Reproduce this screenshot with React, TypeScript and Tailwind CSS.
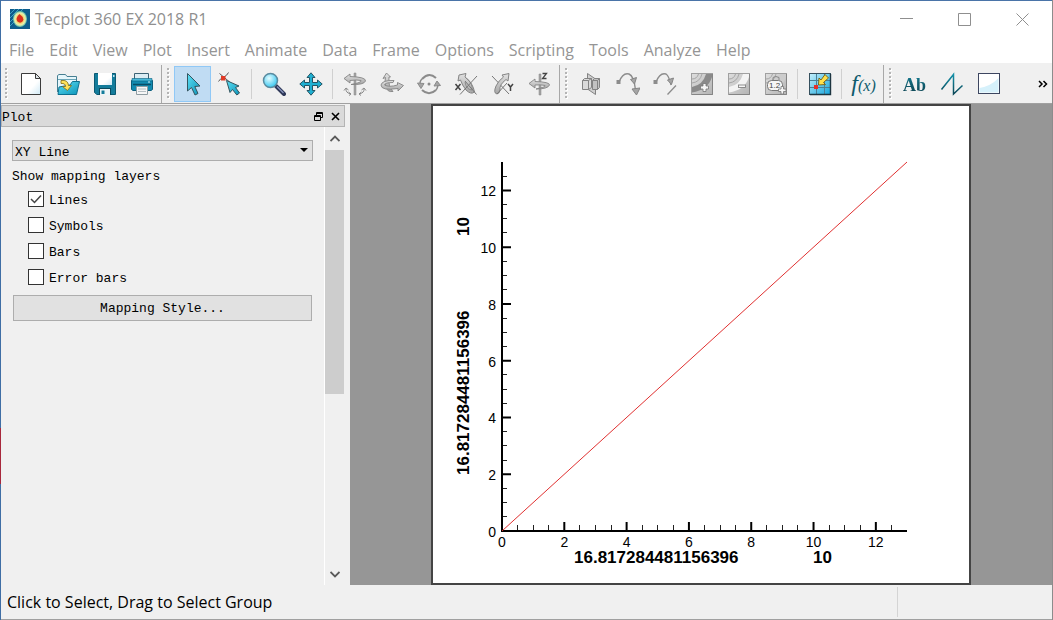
import React, { useState } from 'react';

const uiFont = "font-['Open_Sans','Noto_Sans',sans-serif]";
const panelFont = "font-['Liberation_Mono','Noto_Sans_CJK_SC',monospace]";

const menus = [
  'File', 'Edit', 'View', 'Plot', 'Insert', 'Animate', 'Data',
  'Frame', 'Options', 'Scripting', 'Tools', 'Analyze', 'Help',
];

/* ---------- toolbar icons ---------- */

const Icon: React.FC<{ children: React.ReactNode }> = ({ children }) => (
  <svg width={24} height={24} viewBox="0 0 24 24" fill="none" aria-hidden="true">
    {children}
  </svg>
);

// shared gradients for all icons
const IconDefs = () => (
  <svg width={0} height={0} className="absolute" aria-hidden="true">
    <defs>
      <linearGradient id="cyan" x1="0" y1="0" x2="1" y2="1">
        <stop offset="0" stopColor="#5fe0f5" />
        <stop offset="1" stopColor="#0a93b8" />
      </linearGradient>
      <linearGradient id="paper" x1="0" y1="0" x2="1" y2="1">
        <stop offset="0" stopColor="#ffffff" />
        <stop offset="0.6" stopColor="#ffffff" />
        <stop offset="1" stopColor="#cfe9f5" />
      </linearGradient>
      <linearGradient id="steel" x1="0" y1="0" x2="0" y2="1">
        <stop offset="0" stopColor="#e2e2e2" />
        <stop offset="1" stopColor="#a6a6a6" />
      </linearGradient>
      <linearGradient id="tile" x1="0" y1="0" x2="1" y2="1">
        <stop offset="0" stopColor="#dedede" />
        <stop offset="1" stopColor="#b4b4b4" />
      </linearGradient>
      <linearGradient id="grid" x1="0" y1="0" x2="1" y2="1">
        <stop offset="0" stopColor="#c5f0fb" />
        <stop offset="1" stopColor="#12a4dc" />
      </linearGradient>
      <linearGradient id="teal" x1="0" y1="0" x2="0" y2="1">
        <stop offset="0" stopColor="#1390a8" />
        <stop offset="1" stopColor="#0b4656" />
      </linearGradient>
      <radialGradient id="lens" cx="0.4" cy="0.35" r="0.7">
        <stop offset="0" stopColor="#e6fcff" />
        <stop offset="1" stopColor="#2cc4f0" />
      </radialGradient>
      <radialGradient id="burst">
        <stop offset="0" stopColor="#d4261c" />
        <stop offset="0.35" stopColor="#e2452a" />
        <stop offset="0.5" stopColor="#f2d36b" />
        <stop offset="0.75" stopColor="#e9efb0" />
        <stop offset="1" stopColor="#4db7a5" />
      </radialGradient>
    </defs>
  </svg>
);

const NewIcon = () => (
  <Icon>
    <path d="M2.5 1.5H16.5L21.5 6.5V22.5H2.5Z" fill="url(#paper)" stroke="#3c3c3c" />
    <path d="M16.5 1.5V6.5H21.5Z" fill="#dfe5e8" stroke="#3c3c3c" />
  </Icon>
);

const OpenIcon = () => (
  <Icon>
    <path d="M1.5 20V3.5L3 2.5H9.5L11 4.5H20.5V12" fill="#e6f6fb" stroke="#477f92" />
    <path d="M2 7.5H20" stroke="#6ba6b8" />
    <path d="M2 22.5L3 15L14 13L16.5 9.5H23.5L20.5 22.5Z" fill="url(#cyan)" stroke="#0d6f8f" />
    <path d="M5 8.5Q12 7.5 12.5 13.5H15.5L11.5 18.5L6.5 14.5H9.5Q9.5 11 5 11.5Z" fill="#ffe25a" stroke="#7d6a1b" strokeWidth="0.8" />
  </Icon>
);

const SaveIcon = () => (
  <Icon>
    <path d="M1.5 1.5H22.5V22.5H3.7L1.5 20.3Z" fill="#147c9b" stroke="#0b5a73" />
    <path d="M5 1H19V13H5Z" fill="url(#paper)" />
    <path d="M6 16H18V23H6Z" fill="#0b4a5e" />
    <path d="M7 17H17V23H7Z" fill="#eef4f6" />
    <path d="M8.5 18.5H11.5V22H8.5Z" fill="#147c9b" />
    <path d="M20 3H21.5V5H20Z" fill="#bfe4ef" />
  </Icon>
);

const PrintIcon = () => (
  <Icon>
    <path d="M4.5 1.5H18.5V8H4.5Z" fill="#dcedf4" stroke="#3d6375" />
    <path d="M1.5 8.5H22.5V17.5L21 18.5H3L1.5 17.5Z" fill="#138bb0" stroke="#0c5f7d" />
    <path d="M2 6.5H22V9H2Z" fill="#49b9d9" stroke="#0c5f7d" strokeWidth="0.6" />
    <path d="M3 12.5H21" stroke="#0a4d66" strokeWidth="1.5" />
    <path d="M18 10H20" stroke="#d7f4fb" />
    <path d="M6.500 14.500H17.500V22.500H6.500Z" fill="#f6f6f6" stroke="#8f9ca2" />
    <path d="M8 17H16M8 19.5H16" stroke="#b5bec2" />
  </Icon>
);

const SelectIcon = () => (
  <Icon>
    <path d="M6.5 1.5V19L10.5 15.5L14 23L17 21.5L13.8 14.5L19 14Z" fill="url(#cyan)" stroke="#35555f" />
  </Icon>
);

const AdjustIcon = () => (
  <Icon>
    <path d="M0.5 9.5Q2 6.500 6 5Q9 3.500 10.500 0.500M1.500 1.500L14 12" stroke="#5a5a5a" />
    <rect x="3" y="4" width="4.500" height="4.500" fill="#e03a26" />
    <path d="M8.500 8.500L12 20.500L14.500 17.500L18.800 23L21.500 21L17.500 15.500L21 14Z" fill="url(#cyan)" stroke="#35555f" />
  </Icon>
);

const ZoomIcon = () => (
  <Icon>
    <path d="M14 14L22 22" stroke="#2d3657" strokeWidth="4" strokeLinecap="round" />
    <path d="M15 14.5L21.5 21" stroke="#8895bd" strokeWidth="1.2" />
    <circle cx="8.5" cy="8.5" r="7" fill="url(#lens)" stroke="#5b8ba0" strokeWidth="1.5" />
  </Icon>
);

const MoveIcon = () => (
  <Icon>
    <path
      d="M12 0.800L16 5.500H13.500V10.500H18.500V8L23.200 12L18.500 16V13.500H13.500V18.500H16L12 23.200L8 18.500H10.500V13.500H5.500V16L0.800 12L5.500 8V10.500H10.500V5.500H8Z"
      fill="#1fb0d2"
      stroke="#235565"
    />
  </Icon>
);

const RotateZIcon = () => (
  <Icon>
    <path d="M11 1H13V23H11Z" fill="#a5a5a5" stroke="#8a8a8a" strokeWidth="0.5" />
    <path d="M1 6.500L7 2V4.500Q23 5 22.500 9Q21 13 8 12.500Q19 10.500 18 8.500Q14 7.500 7 8.500V11Z" fill="url(#steel)" stroke="#858585" strokeWidth="0.9" />
    <path d="M8 22Q2.500 21 3 16.500M1 18.500L3 16L5.500 18M5.500 20L8 22L6 23.500M16 22Q21.500 21 21 16.500M23 18.500L21 16L18.500 18M18.500 20L16 22L18 23.500" stroke="#8a8a8a" />
  </Icon>
);

const RotateYIcon = () => (
  <Icon>
    <path d="M6.500 1L10.500 5H9Q8 15 13 19.500Q7 20.500 5.500 14Q4.500 9 5.500 5.500L3 6.500Z" fill="url(#steel)" stroke="#858585" strokeWidth="0.9" />
    <path d="M1 13Q2 8 14 8.500L13 10.500Q5 10.500 4.500 13Q9 15.500 17.500 13V10.500L23.500 13.500L18 19V16.500Q1 19 1 13Z" fill="url(#steel)" stroke="#858585" strokeWidth="0.9" />
  </Icon>
);

const RotateIcon = () => (
  <Icon>
    <path d="M5 7Q12 -0.500 19 6M19 18Q12 24.500 5 18" stroke="#8b8b8b" strokeWidth="2" />
    <path d="M3.500 14.500Q2 9.500 5 7M20.500 10.500Q21.500 15 19 18" stroke="#8b8b8b" strokeWidth="1.500" />
    <path d="M0.500 11L4 16.500L7 11.500Z" fill="#a5a5a5" stroke="#8b8b8b" />
    <path d="M17 14L20 9L23.500 13.500Z" fill="#a5a5a5" stroke="#8b8b8b" />
    <circle cx="12" cy="12" r="1.500" fill="#8b8b8b" />
  </Icon>
);

const RotateXAxisIcon = () => (
  <Icon>
    <path d="M5 3L12 1.500L11 5Q19 11 20.500 20Q17 23 12 18Q8 13 6.500 8L4 9Z" fill="url(#steel)" stroke="#858585" />
    <path d="M11 10Q12.500 18 18 18Q19 11 12 6" stroke="#8a8a8a" />
    <path d="M6 22.500L23 4M11 9L22.500 22.500" stroke="#777" />
    <path d="M1.500 12L6.500 18M6.500 12L1.500 18" stroke="#444" strokeWidth="1.500" />
  </Icon>
);

const RotateYAxisIcon = () => (
  <Icon>
    <path d="M1 4L18 22" stroke="#777" />
    <path d="M11 3L18 1.500L17 9L15 7.500Q8 13 9 18Q9 21 6 22Q2 21 5 14Q8 8 12.500 5Z" fill="url(#steel)" stroke="#858585" />
    <path d="M6 22L16 11" stroke="#777" />
    <path d="M17 12L19.500 15L22 12M19.500 15V19" stroke="#444" strokeWidth="1.500" />
  </Icon>
);

const RotateZAxisIcon = () => (
  <Icon>
    <path d="M11 2H13V23H11Z" fill="#a5a5a5" stroke="#858585" strokeWidth="0.5" />
    <path d="M1 11.500L7 7V9.500Q22 10 21.500 13Q20 17 8 17Q18 15 17 13.500Q13 12.500 7 13V16Z" fill="url(#steel)" stroke="#858585" strokeWidth="0.9" />
    <path d="M14.500 1.500H18.500L14.500 6.500H18.500" stroke="#444" strokeWidth="1.300" />
  </Icon>
);

const SliceIcon = () => (
  <Icon>
    <path d="M8.500 1.500L16.500 7V22.500L8.500 17Z" fill="#cfcfcf" stroke="#838383" />
    <path d="M3.500 8.500H9.500V17.500H3.500ZM3.500 8.500L5.500 6.500H12.500V15.500L9.500 17.500M9.500 8.500L12.500 6.500" fill="#dadada" stroke="#838383" />
    <path d="M13.500 8.500L15.500 6.500H20.500V15.500L18.500 17.500H13.500Z" fill="#c2c2c2" stroke="#838383" />
    <path d="M18.500 8.500V17.500M13.500 8.500H18.500L20.500 6.500" stroke="#838383" />
  </Icon>
);

const StreamIcon = () => (
  <Icon>
    <rect x="0.500" y="8" width="4" height="4" fill="#8c8c8c" />
    <path d="M3 10Q7 0 13 2Q18 4 19.500 18" stroke="#8c8c8c" strokeWidth="1.400" />
    <path d="M14.500 7.500L20.500 5.500L18.500 12ZM16 17L24 16L20.500 23Z" fill="#a5a5a5" stroke="#858585" />
  </Icon>
);

const StreamStopIcon = () => (
  <Icon>
    <rect x="0.500" y="8" width="4" height="4" fill="#8c8c8c" />
    <path d="M3 10Q7 0 13 2Q16 4 18 13" stroke="#8c8c8c" strokeWidth="1.400" />
    <path d="M14.500 8L20.500 6L18.500 12.500Z" fill="#a5a5a5" stroke="#858585" />
    <path d="M14.500 22.500L23 13.500" stroke="#8c8c8c" strokeWidth="1.300" />
  </Icon>
);

const ContourTile: React.FC<{ band: string; children: React.ReactNode }> = ({ band, children }) => (
  <Icon>
    <rect x="1.500" y="1.500" width="21" height="21" fill="url(#tile)" stroke="#a0a0a0" />
    <path d="M2 15Q13 13 16 2H22V5Q18 18 2 20.500Z" fill={band} />
    <path d="M2 7Q7 7 8.500 2M2 11Q10 10 12 2" stroke="#a6a6a6" />
    {children}
    <path d="M2 22.500H22.500V2" stroke="#858585" />
  </Icon>
);

const ContourAddIcon = () => (
  <ContourTile band="#8a8a8a">
    <path d="M13 11.500H16V14H18.500V17H16V19.500H13V17H10.500V14H13Z" fill="#f6f6f6" stroke="#777" strokeWidth="0.8" />
  </ContourTile>
);

const ContourRemoveIcon = () => (
  <ContourTile band="#f4f4f4">
    <rect x="11.500" y="13" width="7" height="2.500" fill="#f6f6f6" stroke="#777" strokeWidth="0.8" />
  </ContourTile>
);

const ContourLabelIcon = () => (
  <ContourTile band="#cccccc">
    <path d="M9 8V5.500Q12 3.500 15 5.500V8" stroke="#888" />
    <rect x="3.500" y="8.500" width="15" height="10" rx="4" fill="#f6f6f6" stroke="#777" />
    <text x="5" y="16" fontSize="8" fontFamily="Liberation Sans, sans-serif" fill="#444">1.2</text>
    <path d="M17 14.500H19.500V17H22V19.500H19.500V22H17V19.500H14.500V17H17Z" fill="#f6f6f6" stroke="#777" strokeWidth="0.8" />
  </ContourTile>
);

const ProbeIcon = () => (
  <Icon>
    <rect x="1.500" y="1.500" width="21" height="21" fill="url(#grid)" stroke="#35505e" />
    <path d="M8.500 2V22M16.500 2V22M2 8.500H22M2 15.500H22" stroke="#4a7f96" />
    <path d="M2 22.500H22.500V2" stroke="#1d3540" strokeWidth="1.400" />
    <path d="M17 2.500L20.500 6L15.500 10.500L17.500 12.500L10.500 13L11 6L13 8Z" fill="#ffe04a" stroke="#6f5d14" strokeWidth="0.9" />
    <rect x="6" y="13" width="4" height="4" fill="#e8302a" />
  </Icon>
);

const PolylineIcon = () => (
  <Icon>
    <path d="M1.500 17.500L13.500 2.500V22L22.500 13.500" stroke="url(#teal)" strokeWidth="1.500" />
  </Icon>
);

const RectIcon = () => (
  <Icon>
    <rect x="1.500" y="1.500" width="21" height="20" fill="#fff" stroke="#3d4660" />
    <path d="M2.500 20.500V16Q14 14 21.500 6V20.500Z" fill="#d6f1fb" />
  </Icon>
);

/* ---------- toolbar ---------- */

interface ToolProps {
  label: string;
  active?: boolean;
  onClick?: () => void;
  children: React.ReactNode;
}

const Tool: React.FC<ToolProps> = ({ label, active, onClick, children }) => (
  <button
    type="button"
    title={label}
    aria-label={label}
    onClick={onClick}
    className={`flex h-9 w-[37px] shrink-0 items-center justify-center border ${
      active ? 'border-[#90c8f6] bg-[#c0dcf3]' : 'border-transparent'
    }`}
  >
    {children}
  </button>
);

const Divider = () => (
  <div className="flex w-[7px] shrink-0 justify-center">
    <div className="h-[30px] w-px bg-[#d0d0d0]" />
  </div>
);

const ToolGroup: React.FC<{ last?: boolean; children: React.ReactNode }> = ({ last, children }) => (
  <div className={`flex items-center pl-1 ${last ? 'min-w-0 flex-1' : 'border-r border-[#a8a8a8] pr-px'}`}>
    <svg width={3} height={32} className="mr-1 shrink-0" aria-hidden="true">
      {[0, 4, 8, 12, 16, 20, 24, 28].map((y) => (
        <g key={y}>
          <rect x={1} y={y + 1} width={2} height={2} fill="#fff" />
          <rect x={0} y={y} width={2} height={2} fill="#b4b4b4" />
        </g>
      ))}
    </svg>
    {children}
  </div>
);

const Toolbar = () => {
  const [tool, setTool] = useState('select');

  return (
    <div className="flex h-[39px] shrink-0 gap-px overflow-hidden border-b border-[#a0a0a0] bg-[#f0f0f0]">
      <ToolGroup>
        <Tool label="New"><NewIcon /></Tool>
        <Tool label="Open"><OpenIcon /></Tool>
        <Tool label="Save"><SaveIcon /></Tool>
        <Tool label="Print"><PrintIcon /></Tool>
      </ToolGroup>
      <ToolGroup>
        <Tool label="Select" active={tool === 'select'} onClick={() => setTool('select')}><SelectIcon /></Tool>
        <Tool label="Adjust" active={tool === 'adjust'} onClick={() => setTool('adjust')}><AdjustIcon /></Tool>
        <Divider />
        <Tool label="Zoom" active={tool === 'zoom'} onClick={() => setTool('zoom')}><ZoomIcon /></Tool>
        <Tool label="Translate" active={tool === 'move'} onClick={() => setTool('move')}><MoveIcon /></Tool>
        <Divider />
        <Tool label="Spherical rotate"><RotateZIcon /></Tool>
        <Tool label="Rollerball rotate"><RotateYIcon /></Tool>
        <Tool label="Twist"><RotateIcon /></Tool>
        <Tool label="Rotate about X"><RotateXAxisIcon /></Tool>
        <Tool label="Rotate about Y"><RotateYAxisIcon /></Tool>
        <Tool label="Rotate about Z"><RotateZAxisIcon /></Tool>
      </ToolGroup>
      <ToolGroup>
        <Tool label="Slice"><SliceIcon /></Tool>
        <Tool label="Streamtrace"><StreamIcon /></Tool>
        <Tool label="Streamtrace termination"><StreamStopIcon /></Tool>
        <Tool label="Add contour level"><ContourAddIcon /></Tool>
        <Tool label="Remove contour level"><ContourRemoveIcon /></Tool>
        <Tool label="Add contour label"><ContourLabelIcon /></Tool>
        <Divider />
        <Tool label="Probe"><ProbeIcon /></Tool>
        <Divider />
        <Tool label="Extract">
          <span className="font-['Liberation_Serif',serif] text-2xl leading-6 text-[#0e5a6c] italic">
            f<span className="text-base">(x)</span>
          </span>
        </Tool>
      </ToolGroup>
      <ToolGroup last>
        <Tool label="Text">
          <span className="bg-linear-to-b from-[#1390a8] to-[#0b3440] bg-clip-text pt-0.5 font-['Liberation_Serif',serif] text-lg font-bold text-transparent">
            Ab
          </span>
        </Tool>
        <Tool label="Polyline"><PolylineIcon /></Tool>
        <Tool label="Rectangle"><RectIcon /></Tool>
        <button type="button" aria-label="More tools" className="ml-auto px-1">
          <svg width={10} height={8} viewBox="0 0 10 8" fill="none" stroke="#000" strokeWidth="1.500">
            <path d="M1 1L4 4L1 7M5.500 1L8.500 4L5.500 7" />
          </svg>
        </button>
      </ToolGroup>
    </div>
  );
};

/* ---------- title bar ---------- */

const AppLogo = () => (
  <svg width={20} height={20} viewBox="0 0 20 20" aria-hidden="true">
    <rect width="20" height="20" fill="#0d5c8c" />
    <path d="M0 5L5 0M0 9L9 0M0 13L13 0M0 17L8 9" stroke="#3fa3c4" strokeWidth="1" />
    <ellipse cx="10" cy="10" rx="7" ry="8" fill="url(#burst)" />
    <path d="M6.500 10Q7 7 9.500 5Q13 8 13.500 10.500Q12.500 13.500 10 13.500Q7 13 6.500 10Z" fill="#d8301f" />
  </svg>
);

const TitleBar = () => (
  <header className="flex h-9 shrink-0 items-center bg-white pr-px pl-[9px] text-[#8f8f8f]">
    <AppLogo />
    <h1 className="ml-[5px] flex-1 text-base">Tecplot 360 EX 2018 R1</h1>
    {[
      { label: 'Minimize', d: 'M0 5.500H13' },
      { label: 'Maximize', d: 'M0.500 0.500H12.500V12.500H0.500Z' },
      { label: 'Close', d: 'M0.500 0.500L12.500 12.500M12.500 0.500L0.500 12.500' },
    ].map(({ label, d }) => (
      <button key={label} type="button" aria-label={label} className="flex h-full w-[58px] items-center justify-center">
        <svg width={13} height={13} viewBox="0 0 13 13" fill="none" stroke="#8f8f8f">
          <path d={d} />
        </svg>
      </button>
    ))}
  </header>
);

const MenuBar = () => (
  <nav className="flex h-[28px] shrink-0 items-center gap-[15px] border-b-2 border-[#f0f0f0] bg-white px-2 text-base text-[#959595]">
    {menus.map((m) => (
      <button key={m} type="button">{m}</button>
    ))}
  </nav>
);

/* ---------- plot sidebar ---------- */

const layerNames = ['Lines', 'Symbols', 'Bars', 'Error bars'];

const PlotPanel = () => {
  const [layers, setLayers] = useState<string[]>(['Lines']);

  const toggle = (name: string) =>
    setLayers((cur) => (cur.includes(name) ? cur.filter((n) => n !== name) : [...cur, name]));

  return (
    <aside className={`flex w-[349px] shrink-0 flex-col pt-px pr-[5px] text-[13px] text-black ${panelFont}`}>
      <div className="flex h-[22px] shrink-0 items-center border border-[#b4b4b4] bg-[#dadada] pr-1">
        <h2 className="flex-1 pt-[3px]">Plot</h2>
        <button type="button" aria-label="Undock" className="mr-2">
          <svg width={9} height={9} viewBox="0 0 9 9" fill="none" stroke="#000">
            <path d="M2.500 3V0.500H8.500V5.500H6.500M2.500 1.500H8.500M0.500 3.500H6.500V8.500H0.500ZM0.500 4.500H6.500" />
          </svg>
        </button>
        <button type="button" aria-label="Close panel">
          <svg width={9} height={9} viewBox="0 0 9 9" fill="none" stroke="#000" strokeWidth="1.600">
            <path d="M1 1L8 8M8 1L1 8" />
          </svg>
        </button>
      </div>

      <div className="flex min-h-0 flex-1 pr-px">
        <div className="flex-1 px-[11px] pt-[13px]">
          <div className="relative">
            <select
              aria-label="Plot type"
              className="block h-[21px] w-full appearance-none border border-[#adadad] bg-[#e1e1e1] pt-0.5 pl-0.5"
            >
              <option>XY Line</option>
            </select>
            <svg width={8} height={4} viewBox="0 0 8 4" className="pointer-events-none absolute top-2 right-[5px]">
              <path d="M0 0H8L4 4Z" fill="#000" />
            </svg>
          </div>

          <fieldset>
            <legend className="h-[30px] leading-8">Show mapping layers</legend>
            <div className="flex flex-col gap-2.5 pl-4">
              {layerNames.map((name) => (
                <label key={name} className="flex h-4 items-center gap-[5px]">
                  <span className="relative size-4">
                    <input
                      type="checkbox"
                      checked={layers.includes(name)}
                      onChange={() => toggle(name)}
                      className="peer block size-4 appearance-none border border-[#333] bg-white"
                    />
                    <svg viewBox="0 0 16 16" fill="none" className="pointer-events-none absolute inset-0 hidden peer-checked:block">
                      <path d="M3 8L6.500 11.500L13 4.500" stroke="#444" strokeWidth="1.500" />
                    </svg>
                  </span>
                  <span className="pt-[3px]">{name}</span>
                </label>
              ))}
            </div>
          </fieldset>

          <div className="px-px pt-2.5">
            <button type="button" className="h-[26px] w-full border border-[#adadad] bg-[#e1e1e1] pt-0.5">
              Mapping Style...
            </button>
          </div>
        </div>

        <div className="flex w-5 shrink-0 flex-col border-l border-white">
          <button type="button" aria-label="Scroll up" className="flex h-[23px] items-center justify-center">
            <svg width={10} height={7} viewBox="0 0 10 7" fill="none" stroke="#5a5a5a" strokeWidth="1.800">
              <path d="M0.500 6L5 1.500L9.500 6" />
            </svg>
          </button>
          <div className="min-h-0 flex-1">
            <div className="h-[59%] bg-[#cdcdcd]" />
          </div>
          <button type="button" aria-label="Scroll down" className="flex h-[21px] items-center justify-center">
            <svg width={10} height={7} viewBox="0 0 10 7" fill="none" stroke="#5a5a5a" strokeWidth="1.800">
              <path d="M0.500 1L5 5.500L9.500 1" />
            </svg>
          </button>
        </div>
      </div>
    </aside>
  );
};

/* ---------- chart ---------- */

const MAX = 13;
const ORIGIN = { x: 71, y: 427 };
const px = (v: number) => ORIGIN.x + (v * 405) / MAX;
const py = (v: number) => ORIGIN.y - (v * 369) / MAX;

const minorTicks = Array.from({ length: MAX * 2 }, (_, i) => i / 2).filter((v) => v % 2 !== 0);
const majorTicks = [0, 2, 4, 6, 8, 10, 12];

const Chart = () => (
  <svg
    viewBox="0 0 540 481"
    className="block h-full max-w-full"
    fontFamily="Liberation Sans, Arial, sans-serif"
    role="img"
    aria-label="XY line plot"
  >
    <rect x="1" y="1" width="538" height="479" fill="#fff" stroke="#444" strokeWidth="2" />
    <g stroke="#222" strokeWidth="1" shapeRendering="crispEdges">
      {minorTicks.map((v) => (
        <path key={v} d={`M${px(v)} ${ORIGIN.y}V${ORIGIN.y - 6}M${ORIGIN.x} ${py(v)}H${ORIGIN.x + 5}`} />
      ))}
    </g>
    <g stroke="#000" strokeWidth="2" fill="none">
      {majorTicks.slice(1).map((v) => (
        <path key={v} d={`M${px(v)} ${ORIGIN.y}V${ORIGIN.y - 9}M${ORIGIN.x} ${py(v)}H${ORIGIN.x + 9}`} />
      ))}
      <path d={`M${ORIGIN.x} ${py(MAX)}V${ORIGIN.y}H${px(MAX)}`} />
    </g>
    <path d={`M${ORIGIN.x} ${ORIGIN.y}L${px(MAX)} ${py(MAX)}`} stroke="#e03030" fill="none" />
    <g fontSize="14">
      {majorTicks.map((v) => (
        <g key={v}>
          <text x={px(v)} y={ORIGIN.y + 16} textAnchor="middle">{v}</text>
          <text x={ORIGIN.x - 6} y={py(v) + 6} textAnchor="end">{v}</text>
        </g>
      ))}
    </g>
    <g fontSize="17" fontWeight="bold">
      <text x={143} y={459}>16.817284481156396</text>
      <text x={382} y={459}>10</text>
      <text transform="translate(38 371) rotate(-90)">16.817284481156396</text>
      <text transform="translate(38 132) rotate(-90)">10</text>
    </g>
  </svg>
);

export default function App() {
  return (
    <div className={`flex h-screen overflow-hidden bg-[#f0f0f0] ${uiFont}`}>
      <IconDefs />
      {/* window edge */}
      <div className="w-px shrink-0 bg-[linear-gradient(#3f6ea5_69%,#a8283c_69%_78%,#3f6ea5_78%)]" />
      <div className="flex min-w-0 flex-1 flex-col border-t border-b border-t-[#4a74a8] border-b-[#a0a0a0]">
        <TitleBar />
        <MenuBar />
        <Toolbar />
        <main className="flex min-h-0 flex-1">
          <PlotPanel />
          <section className="flex min-w-0 flex-1 justify-center bg-[#969696]">
            <Chart />
          </section>
        </main>
        <footer className="flex h-[34px] shrink-0 py-0.5 text-base text-black">
          <p className="flex-1 pl-1.5 leading-[30px]">Click to Select, Drag to Select Group</p>
          <div className="w-[155px] border-l border-[#d4d4d4]" />
        </footer>
      </div>
      <div className="w-px shrink-0 bg-[#8c8c8c]" />
    </div>
  );
}
